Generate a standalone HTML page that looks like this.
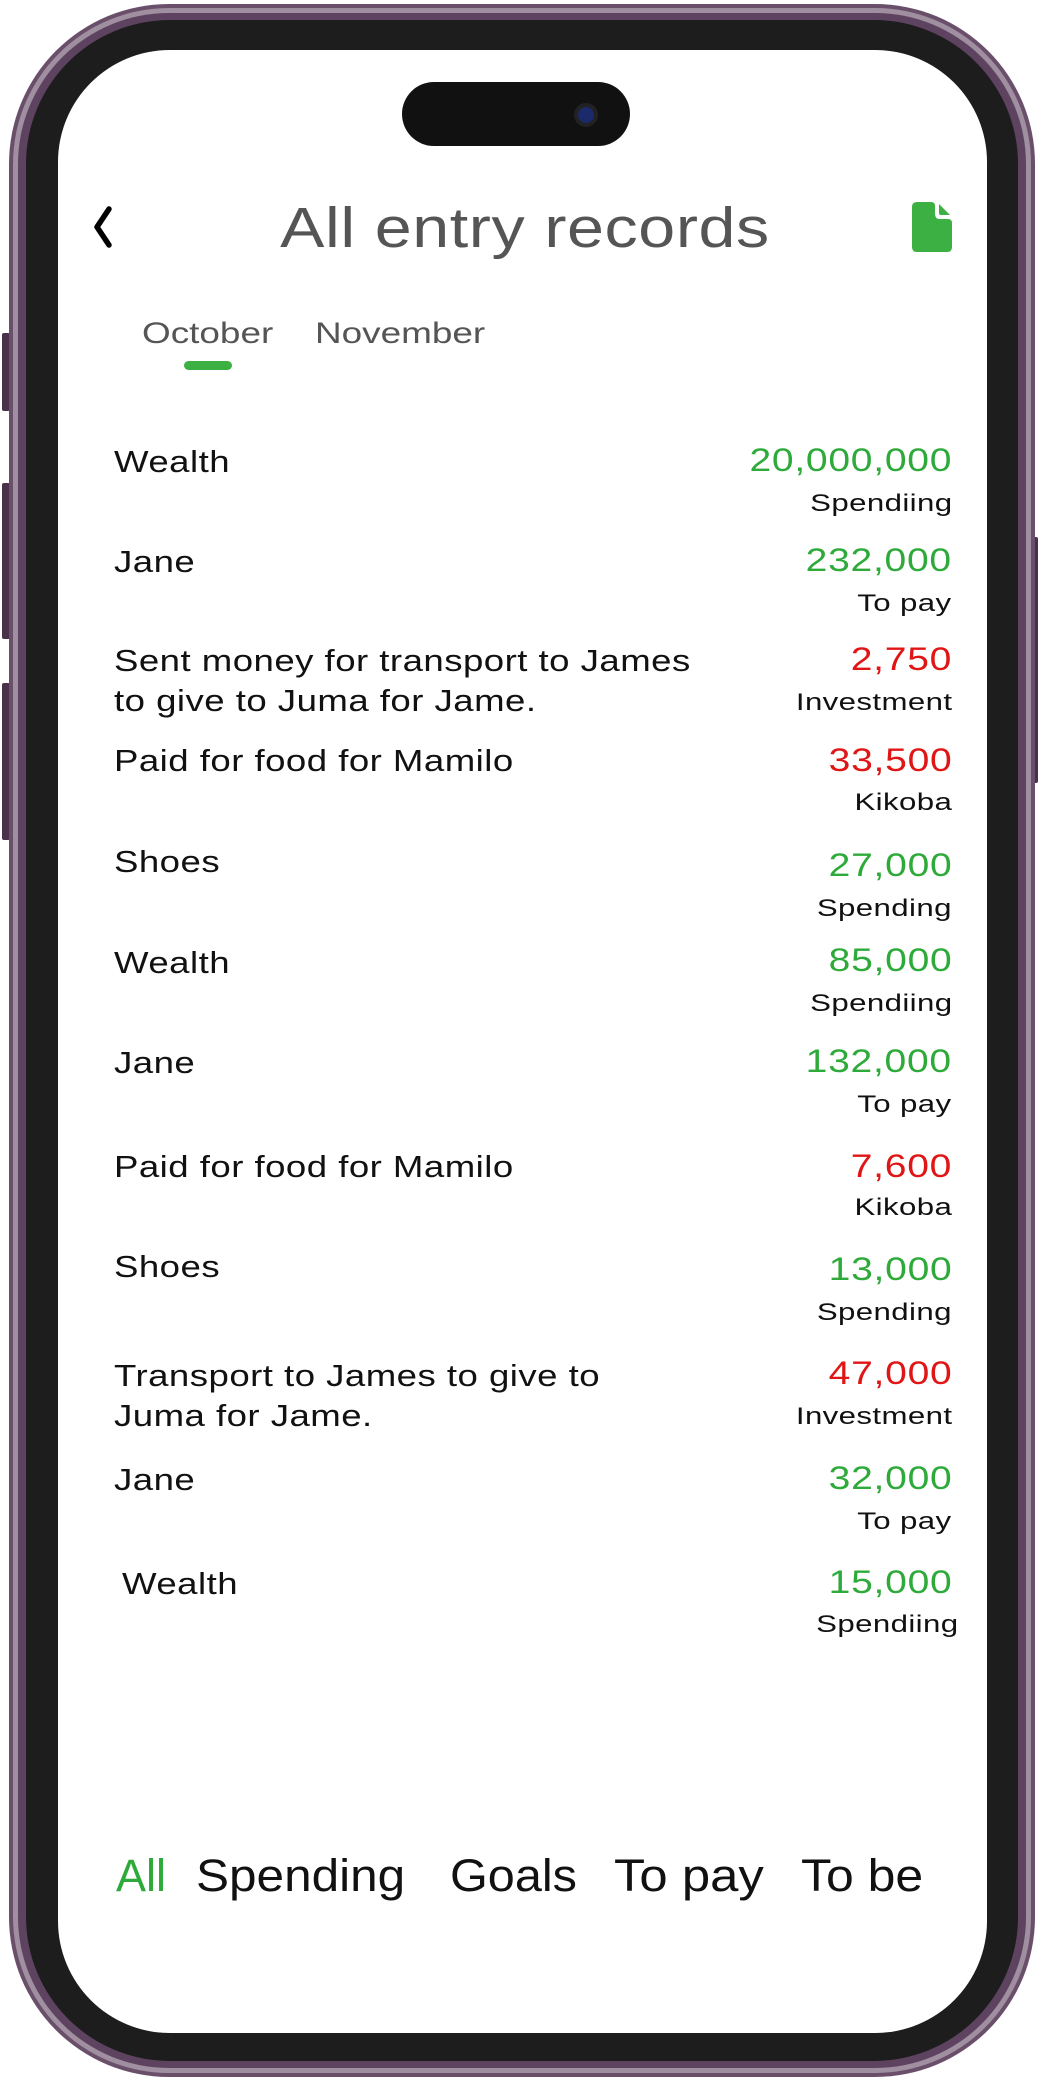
<!DOCTYPE html>
<html><head><meta charset="utf-8"><style>
html,body{margin:0;padding:0;background:#fff;width:1040px;height:2081px;overflow:hidden;position:relative;font-family:"Liberation Sans",sans-serif}
.abs{position:absolute}
.l0{left:9px;top:4px;width:1026px;height:2073px;border-radius:160px;background:#6a4f6a}
.l1{left:13px;top:8px;width:1018px;height:2065px;border-radius:156px;background:#a08fa0}
.l2{left:18px;top:13px;width:1008px;height:2055px;border-radius:151px;background:#5e4360}
.l3{left:26px;top:20px;width:992px;height:2041px;border-radius:144px;background:#1d1d1d}
.scr{left:58px;top:50px;width:929px;height:1983px;border-radius:112px;background:#fff}
.btn{left:2px;width:8px;background:#4a3048;border-radius:2px}
.island{left:402px;top:82px;width:228px;height:64px;border-radius:32px;background:#111}
.cam{left:578px;top:107px;width:16px;height:16px;border-radius:50%;background:#1a2a6a;box-shadow:0 0 0 4px #222}
.title{left:200px;width:650px;top:196px;text-align:center;font-size:57px;line-height:64px;color:#555;letter-spacing:0.5px;transform:scaleX(1.165)}
.tab{top:316px;font-size:30px;line-height:36px;color:#555;transform-origin:left;transform:scaleX(1.23)}
.n{left:114px;font-size:31px;line-height:40px;color:#111;letter-spacing:0.4px;transform-origin:left;transform:scaleX(1.18);white-space:nowrap}
.a{right:88px;font-size:32px;line-height:40px;text-align:right;letter-spacing:0.6px;transform-origin:right;transform:scaleX(1.22)}
.s{right:88px;font-size:24px;line-height:30px;text-align:right;color:#111;letter-spacing:0.3px;transform-origin:right;transform:scaleX(1.3)}
.g{color:#2eaa3a}.r{color:#e01515}
.bt{top:1850px;font-size:45px;line-height:52px;color:#111;transform-origin:left}
</style></head><body>
<div class="abs btn" style="top:333px;height:78px"></div>
<div class="abs btn" style="top:483px;height:156px"></div>
<div class="abs btn" style="top:683px;height:157px"></div>
<div class="abs btn" style="left:1030px;top:537px;height:246px"></div>
<div class="abs l0"></div><div class="abs l1"></div><div class="abs l2"></div><div class="abs l3"></div>
<div class="abs scr"></div>
<div class="abs island"></div><div class="abs cam"></div>

<svg class="abs" style="left:88px;top:204px" width="30" height="46" viewBox="0 0 30 46"><path d="M21 5 L9 23 L21 41" stroke="#000" stroke-width="5.5" fill="none" stroke-linecap="round" stroke-linejoin="round"/></svg>
<div class="abs title">All entry records</div>
<svg class="abs" style="left:910px;top:200px" width="44" height="54" viewBox="0 0 44 54"><path d="M7 2 H21 Q25 2 25 6 V14 Q25 19 30 19 H38 Q42 19 42 23 V47 Q42 52 37 52 H7 Q2 52 2 47 V7 Q2 2 7 2 Z" fill="#3cb043"/><path d="M29 4 L40 15 H31 Q29 15 29 13 Z" fill="#3cb043"/></svg>

<div class="abs tab" style="left:142px">October</div>
<div class="abs tab" style="left:315px">November</div>
<div class="abs" style="left:184px;top:361px;width:48px;height:9px;border-radius:5px;background:#3cb043"></div>

<div class="abs n" style="top:442px">Wealth</div><div class="abs a g" style="top:440px">20,000,000</div><div class="abs s" style="top:489px">Spendiing</div>
<div class="abs n" style="top:542px">Jane</div><div class="abs a g" style="top:540px">232,000</div><div class="abs s" style="top:589px">To pay</div>
<div class="abs n" style="top:641px">Sent money for transport to James<br>to give to Juma for Jame.</div><div class="abs a r" style="top:639px">2,750</div><div class="abs s" style="top:688px">Investment</div>
<div class="abs n" style="top:741px">Paid for food for Mamilo</div><div class="abs a r" style="top:740px">33,500</div><div class="abs s" style="top:788px">Kikoba</div>
<div class="abs n" style="top:842px">Shoes</div><div class="abs a g" style="top:845px">27,000</div><div class="abs s" style="top:894px">Spending</div>
<div class="abs n" style="top:943px">Wealth</div><div class="abs a g" style="top:940px">85,000</div><div class="abs s" style="top:989px">Spendiing</div>
<div class="abs n" style="top:1043px">Jane</div><div class="abs a g" style="top:1041px">132,000</div><div class="abs s" style="top:1090px">To pay</div>
<div class="abs n" style="top:1147px">Paid for food for Mamilo</div><div class="abs a r" style="top:1146px">7,600</div><div class="abs s" style="top:1193px">Kikoba</div>
<div class="abs n" style="top:1247px">Shoes</div><div class="abs a g" style="top:1249px">13,000</div><div class="abs s" style="top:1298px">Spending</div>
<div class="abs n" style="top:1356px">Transport to James to give to<br>Juma for Jame.</div><div class="abs a r" style="top:1353px">47,000</div><div class="abs s" style="top:1402px">Investment</div>
<div class="abs n" style="top:1460px">Jane</div><div class="abs a g" style="top:1458px">32,000</div><div class="abs s" style="top:1507px">To pay</div>
<div class="abs n" style="top:1564px;left:122px">Wealth</div><div class="abs a g" style="top:1562px">15,000</div><div class="abs s" style="top:1610px;right:82px">Spendiing</div>

<div class="abs bt" style="left:116px;color:#2eaa3a">All</div>
<div class="abs bt" style="left:196px;transform:scaleX(1.1)">Spending</div>
<div class="abs bt" style="left:450px;transform:scaleX(1.08)">Goals</div>
<div class="abs bt" style="left:614px;transform:scaleX(1.13)">To pay</div>
<div class="abs bt" style="left:801px;transform:scaleX(1.11)">To be</div>
</body></html>
